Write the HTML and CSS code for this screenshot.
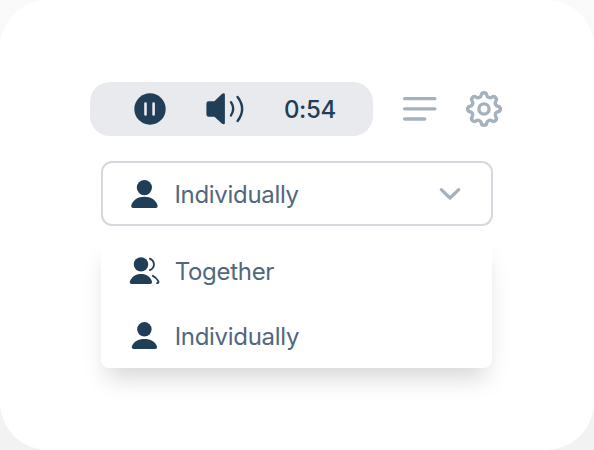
FILE: index.html
```
<!DOCTYPE html>
<html lang="en">
<head>
<meta charset="utf-8">
<title>Player</title>
<link rel="stylesheet" href="styles.css">
</head>
<body>
<main class="card">
  <div class="toolbar">
    <div class="player">
      <svg class="pause" width="32" height="32" viewBox="0 0 32 32"><circle cx="16" cy="16" r="15.7" fill="#203e57"/><path d="M11.5 10.6v10.8M19.6 10.6v10.8" stroke="#e9eaee" stroke-width="2.6" stroke-linecap="round"/></svg>
      <svg class="volume" width="40" height="34" viewBox="0 0 40 34"><path d="M2.6 9.2H8.4L15.8 2.1Q16.7 1.3 17.6 1.3Q18.9 1.3 18.9 2.7V31Q18.9 32.3 17.6 32.3Q16.7 32.3 15.8 31.5L8.4 24.7H2.6Q.4 24.7 .4 22.5V11.4Q.4 9.2 2.6 9.2Z" fill="#203e57"/><path d="M25 10.2Q29.4 16.9 25 23.4M31.6 5Q40.7 16.9 31.6 28.9" fill="none" stroke="#203e57" stroke-width="2.4" stroke-linecap="round"/></svg>
      <span class="time">0:54</span>
    </div>
    <svg class="menu" width="36" height="28" viewBox="0 0 36 28"><path d="M2.6 3.7H32.9M2.6 13.8H32.9M2.6 24H22.8" stroke="#a5b1bd" stroke-width="3.3" stroke-linecap="round"/></svg>
    <svg class="gear" width="40" height="40" viewBox="-20 -20 40 40"><g fill="none" stroke="#a5b1bd" stroke-width="3.4"><path d="M-2.77-13.93A2.8 2.8 0 0 1 2.77-13.93A3.3 3.3 0 0 0 7.89-11.81A2.8 2.8 0 0 1 11.81-7.89A3.3 3.3 0 0 0 13.93-2.77A2.8 2.8 0 0 1 13.93 2.77A3.3 3.3 0 0 0 11.81 7.89A2.8 2.8 0 0 1 7.89 11.81A3.3 3.3 0 0 0 2.77 13.93A2.8 2.8 0 0 1-2.77 13.93A3.3 3.3 0 0 0-7.89 11.81A2.8 2.8 0 0 1-11.81 7.89A3.3 3.3 0 0 0-13.93 2.77A2.8 2.8 0 0 1-13.93-2.77A3.3 3.3 0 0 0-11.81-7.89A2.8 2.8 0 0 1-7.89-11.81A3.3 3.3 0 0 0-2.77-13.93Z"/><circle r="5.1"/></g></svg>
  </div>
  <div class="select">
    <svg class="person" width="32" height="32" viewBox="0 0 32 32"><circle cx="16.4" cy="9.6" r="7.6"/><path d="M5.1 29.9Q3.1 29.9 3.1 27.9C4.6 22 10 18.8 16.4 18.8S28.2 22 29.7 27.9Q29.7 29.9 27.7 29.9Z"/></svg>
    <span class="label">Individually</span>
    <svg class="chevron" width="24" height="16" viewBox="0 0 24 16"><path d="M3.3 3.6L12 12L20.7 3.6" fill="none" stroke="#a5b1bd" stroke-width="3.2" stroke-linecap="round" stroke-linejoin="round"/></svg>
  </div>
  <div class="options">
    <div class="option">
      <svg class="person" width="32" height="32" viewBox="0 0 32 32"><circle cx="13" cy="9.4" r="7.2"/><path d="M3.7 29Q1.7 29 1.7 27C3.5 21.6 8 19 13 19S22.6 21.6 24.1 27Q24.1 29 22.1 29Z"/><path class="outline" d="M21.9 3.6Q25.9 5.5 25.9 9.4T21.9 15.1M24.8 20.8Q28.4 22.3 30.5 26.5Q30.9 27.8 29 28.1"/></svg>
      <span class="label">Together</span>
    </div>
    <div class="option">
      <svg class="person" width="32" height="32" viewBox="0 0 32 32"><circle cx="16.4" cy="9.3" r="7.2"/><path d="M5.7 29Q3.7 29 3.7 27C5.2 21.6 10.4 19 16.4 19S27.6 21.6 29.1 27Q29.1 29 27.1 29Z"/></svg>
      <span class="label">Individually</span>
    </div>
  </div>
</main>
</body>
</html>
```
FILE: styles.css
```
* { box-sizing: border-box; }
body {
  margin: 0;
  background: linear-gradient(#fafafa, #f2f2f2);
  font-family: Inter, "Liberation Sans", sans-serif;
  font-size: 24px;
}
svg { display: block; flex: none; }
.card {
  width: 594px;
  height: 450px;
  padding: 82px 90px 0;
  border-radius: 48px;
  background: #fff;
  overflow: hidden;
}
.toolbar { display: flex; align-items: center; height: 53.6px; }
.player {
  display: flex;
  align-items: center;
  width: 282.5px;
  height: 53.6px;
  padding-left: 44.4px;
  border-radius: 20px;
  background: #e9eaee;
}
.volume { margin-left: 39.6px; }
.time {
  margin-left: 38px;
  padding-top: 2px;
  color: #203e57;
  font-weight: 500;
  line-height: 52px;
  letter-spacing: -.4px;
}
.menu { flex: none; margin-left: 29.5px; }
.gear { margin-left: 26px; }
.select {
  display: flex;
  align-items: center;
  width: 392.6px;
  height: 65px;
  margin: 25.4px 0 0 10.6px;
  padding: 1px 0 0 25.4px;
  border: 2px solid #d4d8df;
  border-radius: 11px;
}
.person { fill: #203e57; }
.outline { fill: none; stroke: #203e57; stroke-width: 1.8; stroke-linecap: round; }
.label {
  margin-left: 14.4px;
  padding-top: 2px;
  color: #52677d;
  line-height: 32px;
  letter-spacing: -.3px;
}
.chevron { margin-left: auto; margin-right: 29.6px; }
.options {
  width: 391px;
  height: 130px;
  margin: 12px 0 0 10.5px;
  padding: 1px 0 0 27.2px;
  border-radius: 8px;
  background: #fff;
  box-shadow: 0 16px 24px -6px rgba(0, 0, 0, .16);
}
.option { display: flex; align-items: center; height: 65px; }
.option .label { margin-left: 15px; }
```
